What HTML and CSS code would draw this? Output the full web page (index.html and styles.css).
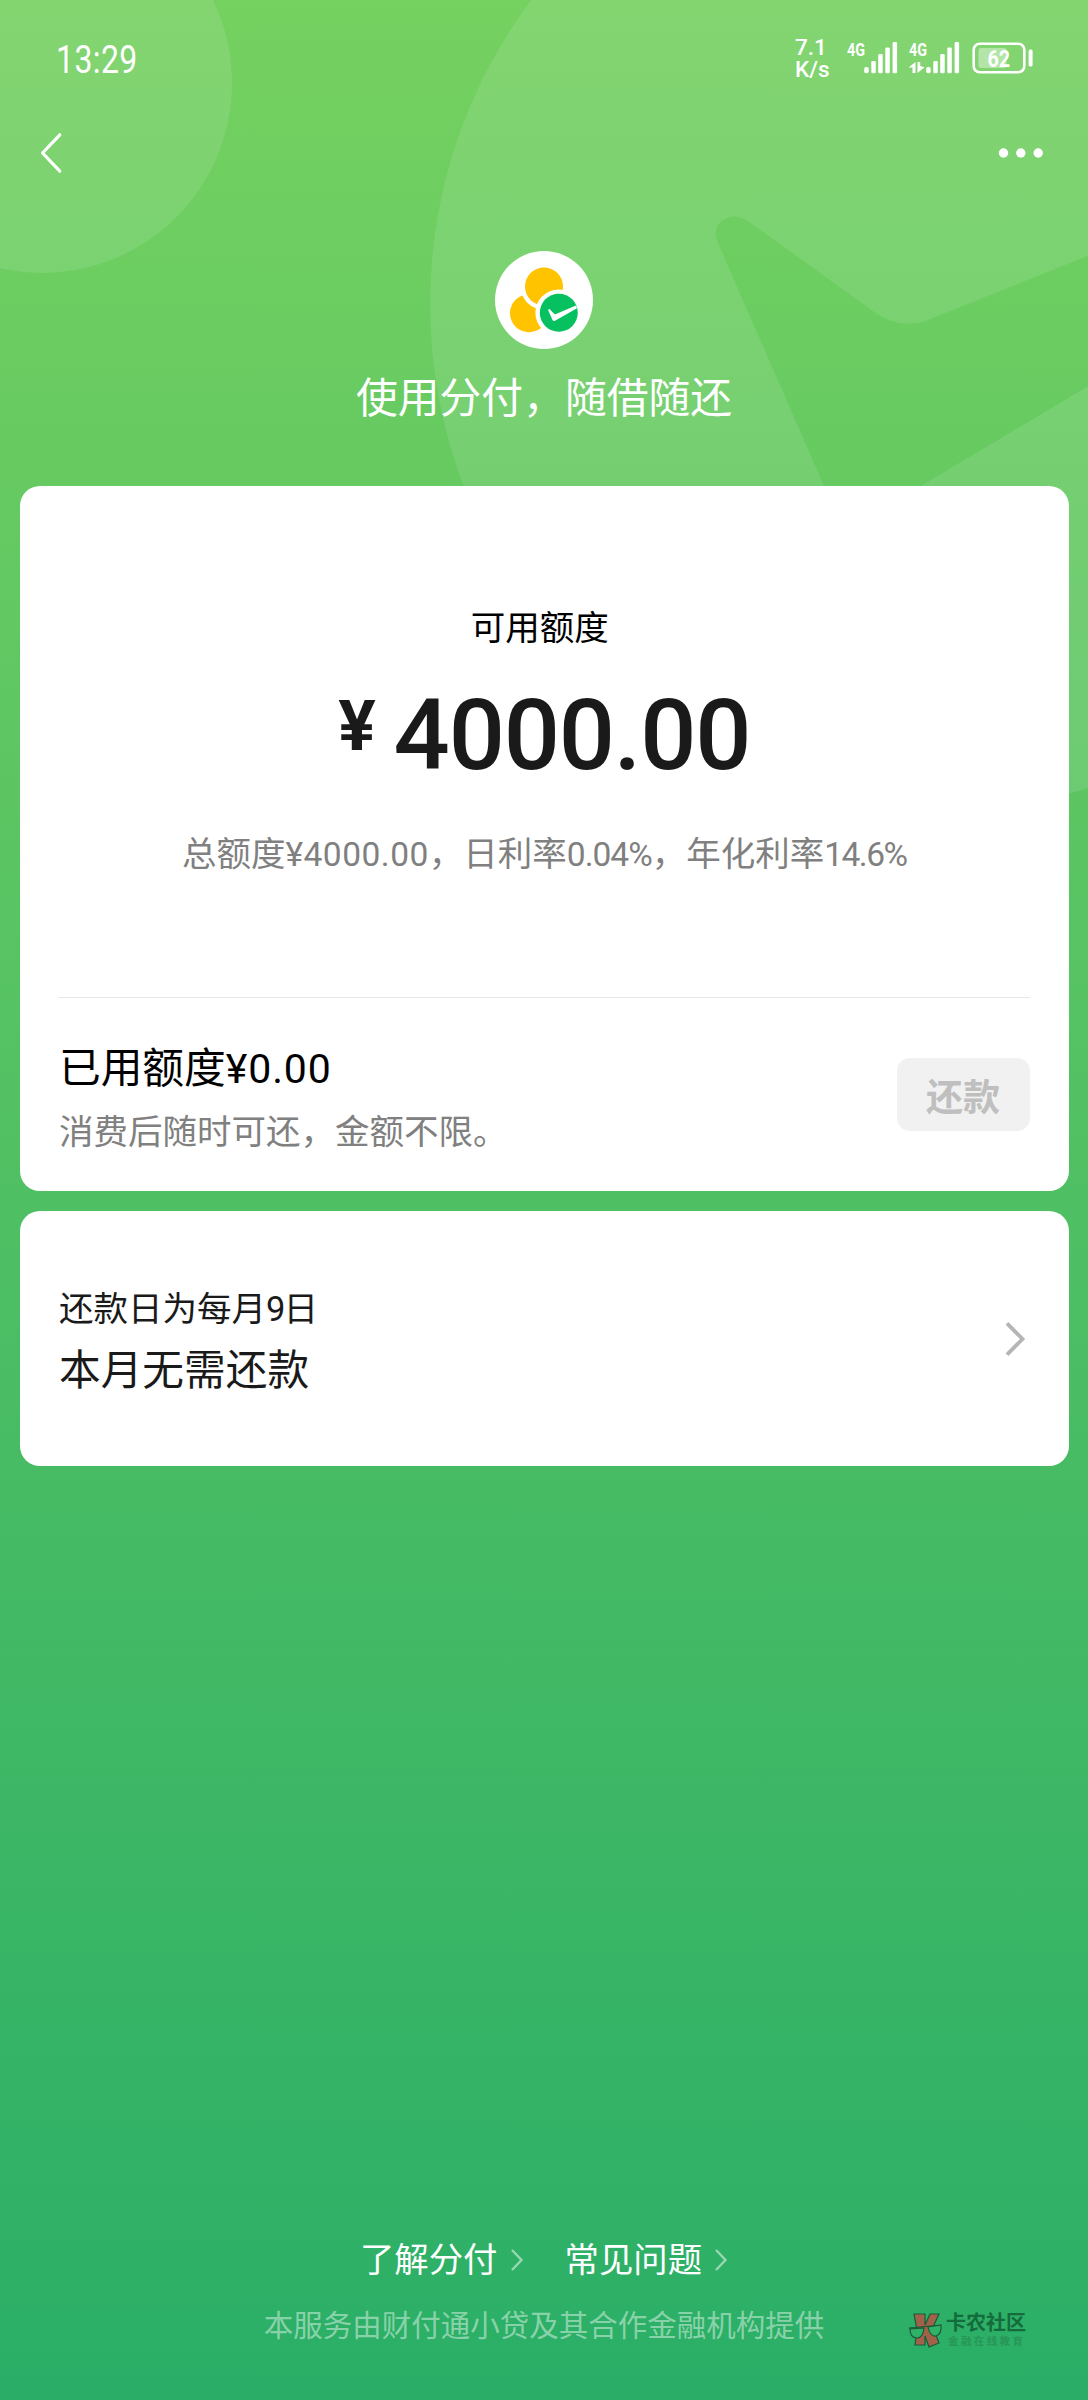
FILE: index.html
```html
<!DOCTYPE html>
<html lang="zh-CN">
<head>
<meta charset="utf-8">
<title>分付</title>
<link rel="stylesheet" href="styles.css">
</head>
<body>
<div class="page">
  <svg class="backdrop" width="1088" height="800" viewBox="0 0 1088 800" aria-hidden="true">
    <circle cx="42" cy="83" r="190"/>
    <path fill-rule="evenodd" d="M937 -203a507 507 0 1 0 0 1014a507 507 0 1 0 0-1014Z M718 243C711 227 722 216.5 735 216.5Q742 217 749 222L877 314Q901 330 928 320L1100 251V379L921 486L880 530H844L824 486Z"/>
  </svg>

  <header class="status">
    <span class="time">13:29</span>
    <div class="status-right">
      <div class="speed"><span>7.1</span><span>K/s</span></div>
      <svg class="signals" width="114" height="46" viewBox="0 -6 114 46">
        <g class="net"><text x="0" y="14.5" textLength="18" lengthAdjust="spacingAndGlyphs">4G</text><text x="62" y="14.5" textLength="18" lengthAdjust="spacingAndGlyphs">4G</text></g>
        <g fill="#fff">
          <rect x="17.2" y="26" width="4.5" height="6.3" rx="1.8"/><rect x="24.3" y="20" width="4.5" height="12.3" rx="1.3"/><rect x="31.2" y="13" width="4.5" height="19.3" rx="1.3"/><rect x="38.3" y="6.5" width="4.5" height="25.8" rx="1.3"/><rect x="45.6" y="1" width="4.5" height="31.3" rx="1.3"/>
          <rect x="79.2" y="26" width="4.5" height="6.3" rx="1.8"/><rect x="86.3" y="20" width="4.5" height="12.3" rx="1.3"/><rect x="93.2" y="13" width="4.5" height="19.3" rx="1.3"/><rect x="100.3" y="6.5" width="4.5" height="25.8" rx="1.3"/><rect x="107.6" y="1" width="4.5" height="31.3" rx="1.3"/>
          <path d="M68.5 21V32H65.5V26.5H61.5ZM70.5 21H73.2V25L77.5 26.2L70.5 32Z"/>
        </g>
      </svg>
      <svg class="battery" width="62" height="32" viewBox="0 0 62 32">
        <rect x="1.7" y="1.7" width="50.6" height="28.6" rx="6" fill="none" stroke="#fff" stroke-width="2.6"/>
        <rect x="6.5" y="6" width="28" height="20" rx="2" fill="#fff" opacity=".4"/>
        <rect x="56.6" y="7.5" width="4" height="17" rx="1.5" fill="#fff"/>
        <text x="15.4" y="25" textLength="22.6" lengthAdjust="spacingAndGlyphs">62</text>
      </svg>
    </div>
  </header>

  <nav class="nav">
    <svg width="24" height="42" viewBox="0 0 24 42"><path d="M20.8 2.8L3.5 21L20.8 39.2" fill="none" stroke="#fff" stroke-width="3.2" stroke-linecap="round" stroke-linejoin="round"/></svg>
    <svg width="46" height="12" viewBox="0 0 46 12" fill="#fff"><circle cx="5.5" cy="6" r="4.7"/><circle cx="22.8" cy="6" r="4.7"/><circle cx="40.2" cy="6" r="4.7"/></svg>
  </nav>

  <section class="hero">
    <svg width="98" height="98" viewBox="0 0 98 98">
      <circle cx="49" cy="49" r="49" fill="#fff"/>
      <circle cx="34" cy="62.3" r="19" fill="#ffc300"/>
      <circle cx="49" cy="35.5" r="23.2" fill="#fff"/>
      <circle cx="49" cy="35.5" r="19" fill="#ffc300"/>
      <circle cx="63.8" cy="61.8" r="23.4" fill="#fff"/>
      <circle cx="63.8" cy="61.8" r="19" fill="#07c160"/>
      <path d="M53 58.7L54.5 58L59.4 63Q60.2 63.3 61 63L81 54.5L82 57.2L60 69.7Q58.5 70.6 57.5 69Z" fill="#fff"/>
    </svg>
    <h1>使用分付，随借随还</h1>
  </section>

  <main>
    <section class="card credit">
      <div class="available">
        <h2>可用额度</h2>
        <div class="amount"><span class="yen">¥</span><span>4000.00</span></div>
        <p>总额度<span class="n1">¥4000.00</span>，日利率<span class="n2">0.04%</span>，年化利率<span class="n3">14.6%</span></p>
      </div>
      <div class="used">
        <div>
          <h3>已用额度<span class="used-sum">¥0.00</span></h3>
          <p>消费后随时可还，金额不限。</p>
        </div>
        <button type="button" disabled>还款</button>
      </div>
    </section>

    <section class="card bill">
      <div class="bill-text">
        <p>还款日为每月<span class="day">9</span>日</p>
        <h3>本月无需还款</h3>
      </div>
      <svg width="22" height="38" viewBox="0 0 22 38"><path d="M2 3.3L17.5 19L2 34.7" fill="none" stroke="#b5b5b5" stroke-width="3.8"/></svg>
    </section>
  </main>

  <footer>
    <div class="links">
      <a>了解分付<svg width="14" height="24" viewBox="0 0 14 24"><path d="M2 2L11.5 12L2 22"/></svg></a>
      <a>常见问题<svg width="14" height="24" viewBox="0 0 14 24"><path d="M2 2L11.5 12L2 22"/></svg></a>
    </div>
    <p>本服务由财付通小贷及其合作金融机构提供</p>
  </footer>

  <div class="watermark">
    <svg width="36" height="36" viewBox="0 0 36 36">
      <path d="M6 2H17V13L22 2H31L25 15L31 31L21 35L17 24V33H7L9 18Z" fill="#a2624a" stroke="#1c5a38" stroke-width="1.2"/>
      <path d="M1 16L33 13M2 17Q2 26 9 26Q15 26 16 16ZM20 15Q22 25 28 24Q34 22 33 13Z" fill="#2fb168" stroke="#1c5a38" stroke-width="1.2"/>
    </svg>
    <div><b>卡农社区</b><small>金融在线教育</small></div>
  </div>
</div>
</body>
</html>
```
FILE: styles.css
```css
* { box-sizing: border-box; margin: 0; padding: 0; }

body {
  font-family: Roboto, "Noto Sans CJK SC", sans-serif;
  font-weight: 400;
}

h1, h2, h3 { font-weight: 400; }
svg { display: block; flex: none; }

.page {
  position: relative;
  width: 1088px;
  height: 2400px;
  overflow: hidden;
  display: flex;
  flex-direction: column;
  background: linear-gradient(#75d160, #2aae67);
  color: #fff;
}

.backdrop {
  position: absolute;
  inset: 0 auto auto 0;
  fill: rgba(255, 255, 255, .1);
}

.status, .nav, .hero, main, footer { position: relative; }

.status {
  height: 114px;
  padding: 2px 54px 0 56px;
  display: flex;
  align-items: center;
  justify-content: space-between;
}

.time {
  padding-top: 3px;
  font-size: 39px;
  letter-spacing: .5px;
  transform: scaleX(.82);
  transform-origin: left center;
}

.status-right { display: flex; align-items: center; }

.speed {
  width: 52px;
  display: flex;
  flex-direction: column;
  font-size: 22.5px;
  font-weight: 500;
  line-height: 22px;
}

.speed span { height: 22px; }
.signals { margin-right: 11px; }
.net text { font: 700 19px Roboto, sans-serif; fill: #fff; }
.battery text { font: 700 24px Roboto, sans-serif; fill: #fff; }

.nav {
  height: 77px;
  padding: 0 44px 0 39px;
  display: flex;
  align-items: center;
  justify-content: space-between;
}

.hero {
  height: 295px;
  padding-top: 60px;
  display: flex;
  flex-direction: column;
  align-items: center;
}

.hero h1 {
  margin-top: 20px;
  font-size: 41.8px;
  line-height: 60px;
}

main {
  padding: 0 19.5px 0 20px;
  display: flex;
  flex-direction: column;
  gap: 20px;
}

.card { border-radius: 20px; background: #fff; color: #000; }

.credit { height: 705px; padding: 0 39px 0 39px; }

.available {
  height: 512px;
  padding-top: 117px;
  border-bottom: 1px solid #e6e6e6;
  text-align: center;
}

.available h2 { font-size: 34.5px; line-height: 50px; margin-left: -9px; }

.amount {
  height: 100px;
  margin-top: 32px;
  display: flex;
  justify-content: center;
  align-items: flex-start;
  font-size: 99px;
  line-height: 100px;
  font-weight: 500;
  letter-spacing: -1.2px;
  color: #1a1a1a;
}

.yen { margin-right: 19px; font-size: 70px; font-weight: 700; line-height: 82px; }

.available p {
  margin-top: 44px;
  font-size: 34.5px;
  line-height: 50px;
  white-space: nowrap;
  color: #808080;
}

.n1, .n2, .n3 { font-size: 33.5px; }
.n1 { letter-spacing: .5px; }
.n2 { letter-spacing: -1px; }
.n3 { letter-spacing: -1.5px; }

.used {
  height: 193px;
  display: flex;
  align-items: center;
  justify-content: space-between;
}

.used > div { padding-top: 6px; }
.used h3, .bill h3 { font-size: 41.7px; line-height: 60px; }
.used p { font-size: 34.5px; line-height: 50px; margin-top: 8px; color: #808080; }
.used-sum { font-size: 41px; letter-spacing: .9px; }

.used button {
  width: 133px;
  height: 73px;
  border: 0;
  border-radius: 13px;
  background: #f1f1f1;
  color: #bfbfbf;
  font: 700 37px "Noto Sans CJK SC", sans-serif;
}

.bill {
  height: 255px;
  padding: 0 42px 0 39px;
  display: flex;
  align-items: center;
  justify-content: space-between;
  color: #1a1a1a;
}

.bill-text { padding-top: 8px; }
.bill p { font-size: 34.5px; line-height: 50px; margin-bottom: 7px; }
.day { letter-spacing: -2px; }

footer {
  margin-top: auto;
  height: 165px;
  text-align: center;
}

.links { display: flex; justify-content: center; gap: 41px; font-size: 34.4px; line-height: 50px; }
.links a { display: flex; align-items: center; gap: 12px; }
.links svg { fill: none; stroke: rgba(255, 255, 255, .5); stroke-width: 2.4; }
footer p { margin-top: 16px; font-size: 29.5px; line-height: 50px; color: rgba(255, 255, 255, .45); }

.watermark {
  position: absolute;
  left: 908px;
  top: 2312px;
  display: flex;
  gap: 2px;
  color: #146b3c;
}

.watermark div { display: flex; flex-direction: column; }
.watermark b { font-size: 20px; line-height: 22px; }
.watermark small { margin-top: 1px; padding-left: 2px; font-size: 10.5px; font-weight: 700; line-height: 14px; letter-spacing: 2.4px; color: #279657; }
```
